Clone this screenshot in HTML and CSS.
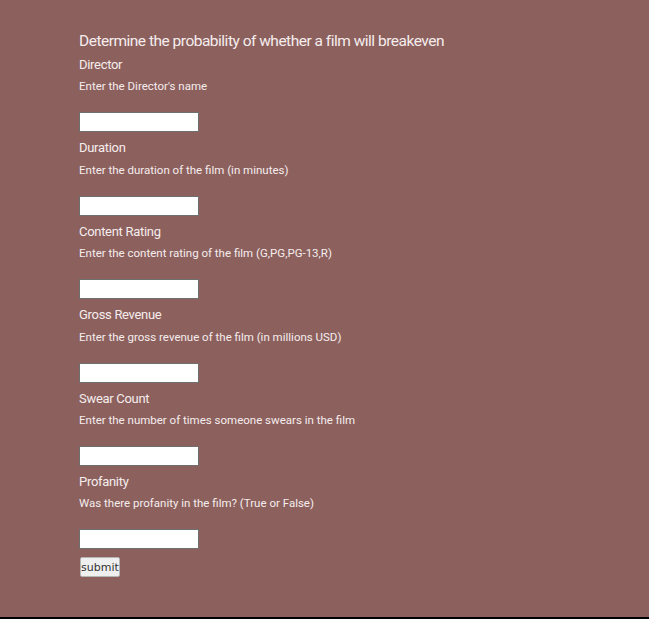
FILE: index.html
```html
<!DOCTYPE html>
<html>
<head>
<meta charset="utf-8">
<link rel="stylesheet" href="styles.css">
</head>
<body>
<div class="page">
  <form class="form">
    <h3 class="title">Determine the probability of whether a film will breakeven</h3>
    <div class="field">
      <div class="label">Director</div>
      <div class="desc">Enter the Director's name</div>
      <input class="box" type="text">
    </div>
    <div class="field">
      <div class="label">Duration</div>
      <div class="desc">Enter the duration of the film (in minutes)</div>
      <input class="box" type="text">
    </div>
    <div class="field">
      <div class="label">Content Rating</div>
      <div class="desc">Enter the content rating of the film (G,PG,PG-13,R)</div>
      <input class="box" type="text">
    </div>
    <div class="field">
      <div class="label">Gross Revenue</div>
      <div class="desc">Enter the gross revenue of the film (in millions USD)</div>
      <input class="box" type="text">
    </div>
    <div class="field">
      <div class="label">Swear Count</div>
      <div class="desc">Enter the number of times someone swears in the film</div>
      <input class="box" type="text">
    </div>
    <div class="field">
      <div class="label">Profanity</div>
      <div class="desc">Was there profanity in the film? (True or False)</div>
      <input class="box" type="text">
    </div>
    <button class="submit" type="button">submit</button>
  </form>
</div>
</body>
</html>
```
FILE: styles.css
```css
html, body {
  margin: 0;
  padding: 0;
  background: #000;
}
.page {
  height: 617px;
  background: #8c605d;
  box-sizing: border-box;
  padding: 30px 0 0 79px;
  font-family: Roboto, sans-serif;
  color: #f5eded;
}
.form {
  display: flex;
  flex-direction: column;
  align-items: flex-start;
}
.title {
  margin: 0 0 4px;
  font-size: 15.5px;
  font-weight: normal;
  line-height: 22px;
  letter-spacing: -0.5px;
}
.field {
  display: flex;
  flex-direction: column;
  align-items: flex-start;
  margin-bottom: 7px;
}
.label {
  font-size: 13px;
  line-height: 18.4px;
  letter-spacing: -0.3px;
}
.desc {
  font-size: 11.5px;
  line-height: 16px;
  letter-spacing: 0;
  margin-top: 4px;
  margin-bottom: 18px;
}
.box {
  width: 120px;
  height: 20px;
  box-sizing: border-box;
  margin: 0;
  border: 1px solid #6f6f6f;
  background: #fff;
  padding: 0;
}
.submit {
  margin: 1px 0 0 1px;
  height: 20px;
  width: 40px;
  padding: 0;
  font-family: "DejaVu Sans", sans-serif;
  font-size: 11px;
  color: #333;
  background: #efefef;
  border: 1px solid #b5b5b5;
  border-radius: 2px;
}
```
